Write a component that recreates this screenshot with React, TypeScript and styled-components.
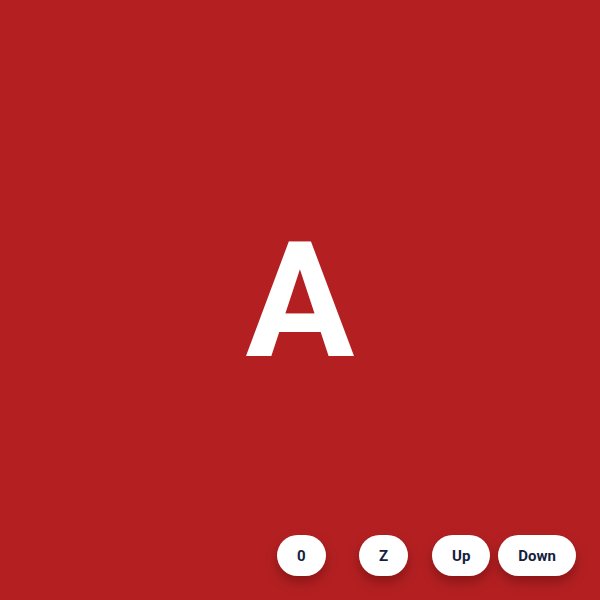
import React from 'react'
import styled, { createGlobalStyle } from 'styled-components'

const GlobalStyle = createGlobalStyle`
  html, body {
    margin: 0;
    padding: 0;
    height: 100%;
  }
  body {
    font-family: Roboto, "Liberation Sans", sans-serif;
  }
  #root {
    height: 100%;
  }
`

const Stage = styled.div`
  position: relative;
  width: 100vw;
  height: 100vh;
  background-color: #b42022;
  display: flex;
  align-items: center;
  justify-content: center;
  overflow: hidden;
`

const Letter = styled.div`
  color: #ffffff;
  font-family: Roboto, "Liberation Sans", sans-serif;
  font-weight: 700;
  font-size: 162px;
  line-height: 1;
  margin-top: 1px;
  user-select: none;
`

const Controls = styled.div`
  position: absolute;
  right: 24px;
  bottom: 24px;
  display: flex;
  align-items: center;
`

const KeyButton = styled.button<{ $gapAfter?: number }>`
  height: 41px;
  min-width: 49px;
  padding: 0 20px;
  margin-right: ${({ $gapAfter }) => $gapAfter ?? 0}px;
  border: none;
  border-radius: 21px;
  background: #ffffff;
  color: #14213d;
  font-family: Roboto, "Liberation Sans", sans-serif;
  font-weight: 700;
  font-size: 15px;
  box-shadow: 0 6px 12px rgba(60, 0, 0, 0.35);
  cursor: pointer;
`

export default function App() {
  return (
    <>
      <GlobalStyle />
      <Stage>
        <Letter>A</Letter>
        <Controls>
          <KeyButton $gapAfter={33}>0</KeyButton>
          <KeyButton $gapAfter={24}>Z</KeyButton>
          <KeyButton $gapAfter={8}>Up</KeyButton>
          <KeyButton>Down</KeyButton>
        </Controls>
      </Stage>
    </>
  )
}
